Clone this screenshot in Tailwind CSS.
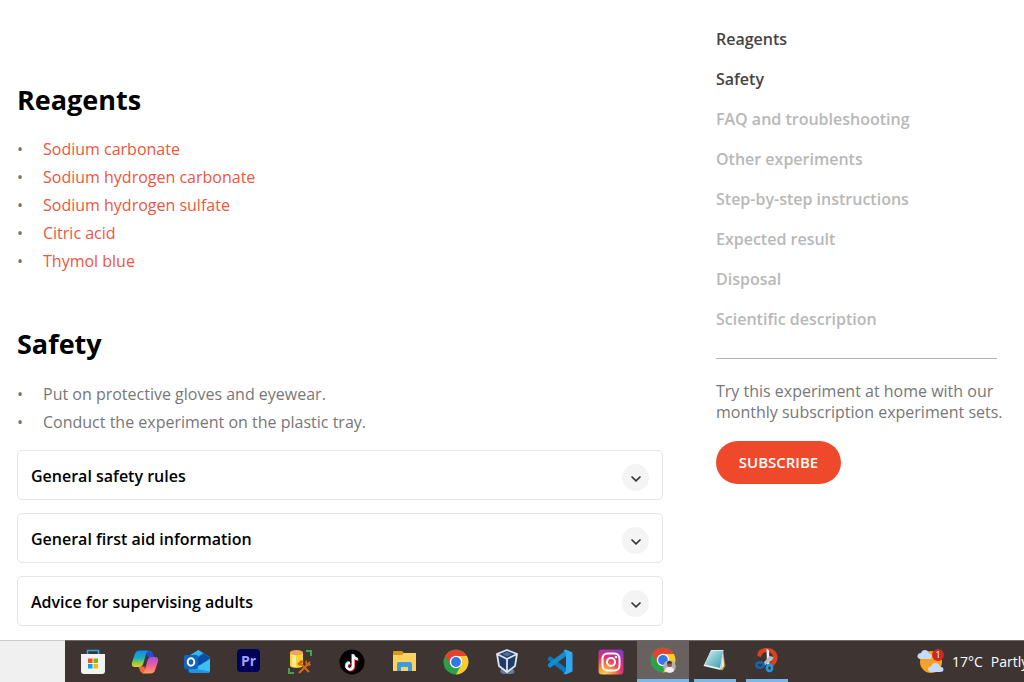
<!DOCTYPE html>
<html lang="en">

<head>
  <meta charset="utf-8">
  <meta name="viewport" content="width=device-width, initial-scale=1">
  <title>Reagents and safety</title>
  <script src="https://cdn.jsdelivr.net/npm/@tailwindcss/browser@4"></script>
</head>

<body class="flex h-screen flex-col overflow-hidden bg-white font-['Open_Sans','Noto_Sans',sans-serif] text-base text-[#777]">

  <div class="flex flex-1 gap-[53px] overflow-hidden pl-[17px] pr-[27px]">

    <main class="min-w-0 flex-1 pt-20">
      <section>
        <h2 class="text-[27px] leading-10 font-bold text-black">Reagents</h2>
        <ul class="mt-[15px] leading-7">
          <li class="flex"><span class="w-[26px]">•</span><a href="#" class="text-[#f0553d]">Sodium carbonate</a></li>
          <li class="flex"><span class="w-[26px]">•</span><a href="#" class="text-[#f0553d]">Sodium hydrogen carbonate</a></li>
          <li class="flex"><span class="w-[26px]">•</span><a href="#" class="text-[#f0553d]">Sodium hydrogen sulfate</a></li>
          <li class="flex"><span class="w-[26px]">•</span><a href="#" class="text-[#f0553d]">Citric acid</a></li>
          <li class="flex"><span class="w-[26px]">•</span><a href="#" class="text-[#f0553d]">Thymol blue</a></li>
        </ul>
      </section>

      <section class="mt-[49px]">
        <h2 class="text-[27px] leading-10 font-bold text-black">Safety</h2>
        <ul class="mt-4 leading-7">
          <li class="flex"><span class="w-[26px]">•</span>Put on protective gloves and eyewear.</li>
          <li class="flex"><span class="w-[26px]">•</span>Conduct the experiment on the plastic tray.</li>
        </ul>
        <div class="mt-[14px] flex flex-col gap-[13px]">
          <button type="button" class="flex h-[50px] items-center justify-between rounded-[5px] border border-[#e5e5e5] px-[13px] pt-[2px] text-left font-semibold text-black">
            General safety rules
            <span class="mt-[2px] flex size-[27px] items-center justify-center rounded-full bg-[#f4f4f4]">
              <svg class="mt-1" width="12" height="8" viewBox="0 0 12 8" fill="none" stroke="#333" stroke-width="1.7"><path d="M1.5 1.5 6 5.8l4.5-4.3" /></svg>
            </span>
          </button>
          <button type="button" class="flex h-[50px] items-center justify-between rounded-[5px] border border-[#e5e5e5] px-[13px] pt-[2px] text-left font-semibold text-black">
            General first aid information
            <span class="mt-[2px] flex size-[27px] items-center justify-center rounded-full bg-[#f4f4f4]">
              <svg class="mt-1" width="12" height="8" viewBox="0 0 12 8" fill="none" stroke="#333" stroke-width="1.7"><path d="M1.5 1.5 6 5.8l4.5-4.3" /></svg>
            </span>
          </button>
          <button type="button" class="flex h-[50px] items-center justify-between rounded-[5px] border border-[#e5e5e5] px-[13px] pt-[2px] text-left font-semibold text-black">
            Advice for supervising adults
            <span class="mt-[2px] flex size-[27px] items-center justify-center rounded-full bg-[#f4f4f4]">
              <svg class="mt-1" width="12" height="8" viewBox="0 0 12 8" fill="none" stroke="#333" stroke-width="1.7"><path d="M1.5 1.5 6 5.8l4.5-4.3" /></svg>
            </span>
          </button>
        </div>
      </section>
    </main>

    <aside class="w-[281px] shrink-0 pt-[19px]">
      <nav class="flex flex-col font-semibold leading-10 text-[#b8b8b8]">
        <a href="#" class="text-[#444]">Reagents</a>
        <a href="#" class="text-[#444]">Safety</a>
        <a href="#">FAQ and troubleshooting</a>
        <a href="#">Other experiments</a>
        <a href="#">Step-by-step instructions</a>
        <a href="#">Expected result</a>
        <a href="#">Disposal</a>
        <a href="#">Scientific description</a>
      </nav>
      <hr class="mt-[19px] border-[#b5b5b5]">
      <p class="mt-[22px] leading-[21px] whitespace-nowrap">Try this experiment at home with our<br>monthly subscription experiment sets.</p>
      <button type="button" class="mt-[18px] h-[43px] w-[125px] rounded-full bg-[#ef492b] text-[15px] font-semibold text-white">SUBSCRIBE</button>
    </aside>
  </div>

  <!-- taskbar -->
  <footer class="flex h-[42px] shrink-0 overflow-hidden bg-[#3e3532]">
    <div class="w-[65px] shrink-0 border-t border-[#c8c8c8] bg-[#f0f0f0]"></div>
    <div class="grid w-[728px] shrink-0 grid-cols-14 border-t border-[#6f6866] pl-[2px]">

      <button type="button" aria-label="Microsoft Store" class="flex items-center justify-center">
        <svg width="26" height="26" viewBox="0 0 26 26">
          <path d="M7.5 6V1.5h11V6" fill="none" stroke="#26a9e0" stroke-width="1.6" />
          <path d="M1 5h24v17q0 3-3 3H4q-3 0-3-3z" fill="#f3f2f2" />
          <path d="M8 9.5h4.5V14H8z" fill="#f25022" /><path d="M13.5 9.5H18V14h-4.5z" fill="#7fba00" />
          <path d="M8 15h4.5v4.5H8z" fill="#00a4ef" /><path d="M13.5 15H18v4.5h-4.5z" fill="#ffb900" />
        </svg>
      </button>

      <button type="button" aria-label="Copilot" class="flex items-center justify-center">
        <svg width="28" height="26" viewBox="0 0 28 26">
          <defs>
            <linearGradient id="cpA" x1="0" y1="0" x2="0" y2="1"><stop stop-color="#1487ed" /><stop offset=".45" stop-color="#19aebd" /><stop offset=".75" stop-color="#94c83f" /><stop offset="1" stop-color="#f8c928" /></linearGradient>
            <linearGradient id="cpB" x1="0" y1="0" x2="0" y2="1"><stop stop-color="#a54ee1" /><stop offset=".5" stop-color="#ef5d9b" /><stop offset="1" stop-color="#ff9d55" /></linearGradient>
          </defs>
          <path d="M14 1.5h5q2 0 2.800 2.500L23 8h-6z" fill="#1e50cf" />
          <path d="M7.5 17.5h6L14.500 24H12q-2 0-2.800-2z" fill="#f4693c" />
          <path d="M9 1.5h8.500q-1.500.5-2.300 3.200L12.500 14q-1 4-4.500 4H4q-4 0-3-4.500L4 4.500q1-3 5-3z" fill="url(#cpA)" />
          <path d="M20 8h4q4 0 3 4.500l-3 9q-1 3-5 3h-8q2-.5 3-4l2.500-9Q17.500 8 20 8z" fill="url(#cpB)" />
        </svg>
      </button>

      <button type="button" aria-label="Outlook" class="flex items-center justify-center">
        <svg width="28" height="26" viewBox="0 0 28 26">
          <path d="M4 8 15.5 1 27 8v13q0 3-3 3H8q-3 0-3-3z" fill="#1172c7" />
          <path d="m4 8 11.5-7L20 4 9 12z" fill="#38b5ef" /><path d="m10 12 11-7 6 4-10 8z" fill="#0a4ba5" />
          <path d="M27 10v11q0 3-3 3H9l-2-2z" fill="#39c1f3" /><path d="m7 19 20 3.500Q26 24 24 24H9q-3 0-3-3z" fill="#2391e4" />
          <rect x="1" y="6" width="14" height="14" rx="1.5" fill="#0f64be" />
          <ellipse cx="8" cy="13" rx="3.3" ry="3.8" fill="none" stroke="#fff" stroke-width="2" />
        </svg>
      </button>

      <button type="button" aria-label="Premiere Pro" class="flex items-center justify-center">
        <span class="mb-[2px] flex h-[23px] w-[23px] items-center justify-center rounded-[4px] bg-[#00005b] text-sm font-bold text-[#a6a0ff]">Pr</span>
      </button>

      <button type="button" aria-label="Database tools" class="flex items-center justify-center">
        <svg width="26" height="26" viewBox="0 0 26 26">
          <path d="M3 3.5v13c0 3.2 13 3.2 13 0v-13z" fill="#f8d439" /><path d="M5 5h4v13q-3 0-4-1z" fill="#ffee8c" />
          <ellipse cx="9.5" cy="3.7" rx="6.5" ry="2.6" fill="#eda65c" />
          <path d="M19 2h5v5M2 19v5h5" fill="none" stroke="#45a14b" stroke-width="2" />
          <path d="m13 14 9 9m1-10-11 11" stroke="#d56816" stroke-width="2.2" />
          <path d="m10 15 4-4 3 1-4 5zm10-4v4h4l1-2-2 4-4-1-1-3z" fill="#d56816" />
        </svg>
      </button>

      <button type="button" aria-label="TikTok" class="flex items-center justify-center">
        <svg width="26" height="26" viewBox="0 0 26 26">
          <circle cx="13" cy="13" r="12.5" fill="#000" />
          <g fill="none" stroke-width="2.3">
            <path d="M13.5 5v11.5a3.3 3.3 0 1 1-3.3-3.3M13.5 5q.5 4 4.5 4.500" stroke="#25f4ee" />
            <path d="M15 6.5V18a3.3 3.3 0 1 1-3.3-3.3M15 6.5q.5 4 4.5 4.500" stroke="#fe2c55" />
            <path d="M14.2 5.5v11.7a3.3 3.3 0 1 1-3.3-3.3M14.2 5.5q.5 4.200 4.600 4.700" stroke="#fff" />
          </g>
        </svg>
      </button>

      <button type="button" aria-label="File Explorer" class="flex items-center justify-center">
        <svg width="26" height="26" viewBox="0 0 26 26">
          <path d="M2 3q0-1 1-1h8l2 2v4H2z" fill="#d89716" />
          <path d="M2 6h9l2-2h12v18H2z" fill="#fbd35e" />
          <path d="M6 22v-7q0-2 2-2h11q2 0 2 2v7h-4v-4h-7v4z" fill="#3c9be0" />
        </svg>
      </button>

      <button type="button" aria-label="Chrome" class="flex items-center justify-center">
        <svg width="26" height="26" viewBox="0 0 26 26">
          <circle cx="13" cy="13" r="12.5" fill="#2aa04a" />
          <path d="M13 7h10.9A12.5 12.5 0 0 1 13 25.5L18.2 16z" fill="#fccb2e" />
          <path d="M2.2 6.7A12.5 12.5 0 0 1 23.8 7H13l-5.2 9z" fill="#e4412f" />
          <circle cx="13" cy="13" r="6.2" fill="#fff" /><circle cx="13" cy="13" r="4.9" fill="#3079ea" />
        </svg>
      </button>

      <button type="button" aria-label="VirtualBox" class="flex items-center justify-center">
        <svg width="26" height="26" viewBox="0 0 26 26">
          <path d="M6 20h12l2 3-3 2H8l-3-2z" fill="#67799a" />
          <path d="m12 1 10 4-2 12-8 6-8-6L2 5z" fill="#1f3c66" />
          <path d="m7 5 5-2 5 2-5 2.500z" fill="#526f98" />
          <path d="m12 1 10 4-2 12-8 6-8-6L2 5zm0 9v12M2 5l10 5 10-5" fill="none" stroke="#dce5f0" stroke-width="1.8" />
        </svg>
      </button>

      <button type="button" aria-label="Visual Studio Code" class="flex items-center justify-center">
        <svg width="26" height="26" viewBox="0 0 26 26">
          <path d="M1 9 3 7l16 12v6L1 11z" fill="#087abf" />
          <path d="M1 17l2 2L19 7V1L1 15z" fill="#168bd3" />
          <path d="m18.5.5 6 2.500q1 .5 1 1.500v17q0 1-1 1.500l-6 2.500-2-1L19 22V4l-2.500-2.500z" fill="#30a8f2" />
        </svg>
      </button>

      <button type="button" aria-label="Instagram" class="flex items-center justify-center">
        <svg width="26" height="26" viewBox="0 0 26 26">
          <defs><radialGradient id="ig" cx=".25" cy="1" r="1.15"><stop stop-color="#ffd34e" /><stop offset=".3" stop-color="#fb8a3c" /><stop offset=".6" stop-color="#e52f70" /><stop offset="1" stop-color="#833ac7" /></radialGradient></defs>
          <rect x=".5" y=".5" width="25" height="25" rx="3.5" fill="url(#ig)" />
          <g fill="none" stroke="#fff" stroke-width="2"><rect x="4.5" y="4.5" width="17" height="17" rx="5" /><circle cx="13" cy="13" r="4" /></g>
          <circle cx="18" cy="8" r="1.2" fill="#fff" />
        </svg>
      </button>

      <button type="button" aria-label="Chrome, profile window" class="flex items-center justify-center border-b-3 border-[#76b9ed] bg-[#69615f]">
        <svg width="26" height="26" viewBox="0 0 26 26">
          <circle cx="13" cy="13" r="12.5" fill="#2aa04a" />
          <path d="M13 7h10.9A12.5 12.5 0 0 1 13 25.5L18.2 16z" fill="#fccb2e" />
          <path d="M2.2 6.7A12.5 12.5 0 0 1 23.8 7H13l-5.2 9z" fill="#e4412f" />
          <circle cx="13" cy="13" r="6.2" fill="#fff" /><circle cx="13" cy="13" r="4.9" fill="#3079ea" />
          <circle cx="19.5" cy="19.5" r="6.3" fill="#b6aeb3" />
          <path d="M15 24q0-4 4.500-4t4.500 4q-4 3.500-9 0z" fill="#f1edf3" />
          <circle cx="19.5" cy="17.5" r="2.5" fill="#81594b" /><path d="M17 16.5q0-2.500 2.500-2.500t2.500 2.500z" fill="#38302f" />
        </svg>
      </button>

      <button type="button" aria-label="Notepad" class="mx-[5px] flex items-center justify-center border-b-3 border-[#76b9ed]">
        <svg width="26" height="26" viewBox="0 0 26 26">
          <defs><linearGradient id="np" x1="0" y1="0" x2="1" y2="1"><stop stop-color="#d5f0f2" /><stop offset=".5" stop-color="#7fc4ce" /><stop offset="1" stop-color="#3f98a8" /></linearGradient></defs>
          <path d="m21 4 2.500 15-3 4.500-4-2z" fill="#a8873c" />
          <path d="m21 4 1 15-3 4z" fill="#e9ecec" />
          <path d="M9 3h12.500l-3 20L1.500 19z" fill="#e4f2f3" />
          <path d="M9 4h12l-3 17L3 17.500z" fill="url(#np)" />
        </svg>
      </button>

      <button type="button" aria-label="Snipping Tool" class="mx-[5px] flex items-center justify-center border-b-3 border-[#76b9ed]">
        <svg width="26" height="26" viewBox="0 0 26 26">
          <path d="M3.5 9Q3 2 11 1q11-1 12.500 8.500.5 6-5 10l-3-3q4-3 3.500-7Q18 4.500 12 5 8 5.500 7 10z" fill="#d94320" />
          <path d="m12.500 1.500 2.500 2 .5 15-2.500-1z" fill="#eceded" />
          <path d="m15.500 9 4 1-1 3-8.500 6-1.500-2z" fill="#b9bcc0" />
          <ellipse cx="6" cy="18" rx="3.700" ry="2.600" fill="none" stroke="#1463b4" stroke-width="2.600" />
          <ellipse cx="15.500" cy="21" rx="2.600" ry="3" fill="none" stroke="#2a95dc" stroke-width="2.600" />
        </svg>
      </button>
    </div>

    <div class="flex flex-1 justify-end border-t border-[#6f6866]">
      <button type="button" class="flex w-[107px] shrink-0 items-center gap-2 overflow-hidden whitespace-nowrap text-sm text-white">
        <span class="relative shrink-0">
          <svg width="27" height="26" viewBox="0 0 27 26">
            <circle cx="14" cy="13" r="11" fill="#f5a126" />
            <path d="M3 10q-3-1-2.500-3.500Q1 4 4 4q1-3 4-3t4 3.500q3 0 3 3T12 10z" fill="#c5dbf8" />
            <path d="M14 23q-3-.5-3-3t3-2.500q1-3.500 4.500-3.500t4.500 3.500q3.500.5 3.500 3T23 23z" fill="#c5dbf8" />
          </svg>
          <span class="absolute top-0 right-0 flex size-3 items-center justify-center rounded-full bg-[#c92b20] text-[9px] leading-3">1</span>
        </span>
        <span>17°C</span>
        <span>Partly</span>
      </button>
    </div>
  </footer>

</body>

</html>
